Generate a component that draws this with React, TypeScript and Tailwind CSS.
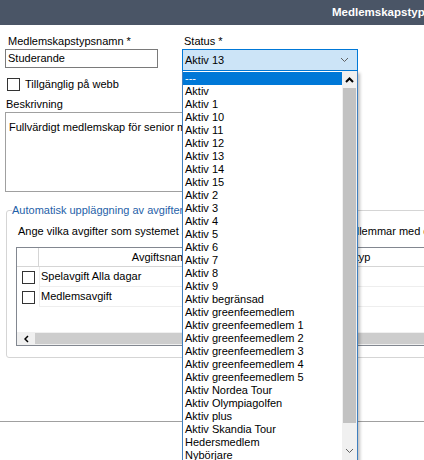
import React from "react";

const statusOptions = [
  "---",
  "Aktiv",
  "Aktiv 1",
  "Aktiv 10",
  "Aktiv 11",
  "Aktiv 12",
  "Aktiv 13",
  "Aktiv 14",
  "Aktiv 15",
  "Aktiv 2",
  "Aktiv 3",
  "Aktiv 4",
  "Aktiv 5",
  "Aktiv 6",
  "Aktiv 7",
  "Aktiv 8",
  "Aktiv 9",
  "Aktiv begränsad",
  "Aktiv greenfeemedlem",
  "Aktiv greenfeemedlem 1",
  "Aktiv greenfeemedlem 2",
  "Aktiv greenfeemedlem 3",
  "Aktiv greenfeemedlem 4",
  "Aktiv greenfeemedlem 5",
  "Aktiv Nordea Tour",
  "Aktiv Olympiagolfen",
  "Aktiv plus",
  "Aktiv Skandia Tour",
  "Hedersmedlem",
  "Nybörjare",
];

const fees = ["Spelavgift Alla dagar", "Medlemsavgift"];

function Box() {
  return <div className="w-[13px] h-[13px] border border-[#333333] bg-white shrink-0" />;
}

function Chevron({ up = false, bold = false }: { up?: boolean; bold?: boolean }) {
  return (
    <svg width="9" height="6" viewBox="0 0 9 6" className="block">
      <path
        d={up ? "M1 5 L4.5 1.5 L8 5" : "M1 1 L4.5 4.5 L8 1"}
        fill="none"
        stroke={bold ? "#000000" : "#606060"}
        strokeWidth={bold ? 2 : 1}
      />
    </svg>
  );
}

export default function App() {
  return (
    <div className="relative w-[424px] h-[460px] overflow-hidden bg-white text-black text-[11px] font-['Liberation_Sans',Arial,sans-serif]">
      <div className="h-[25px] bg-[#4a5566] flex items-center pl-[332px] whitespace-nowrap text-white font-bold text-[11.5px]">
        Medlemskapstyp
      </div>

      <div className="w-[620px] px-[5px] pt-[9px]">
        <div className="flex">
          <div className="w-[153px]">
            <div className="pl-[3px] leading-[15px]">Medlemskapstypsnamn *</div>
            <div className="h-[19px] border border-[#7a7a7a] flex items-center pl-[2px]">Studerande</div>
          </div>
          <div className="ml-[24px] w-[176px]">
            <div className="pl-[2px] leading-[15px]">Status *</div>
            <div className="h-[22px] border border-[#0078d7] bg-[#cce4f7] flex items-center justify-between pl-[2px] pr-[8px]">
              <span>Aktiv 13</span>
              <Chevron />
            </div>
          </div>
        </div>

        <div className="mt-[7px] ml-[2px] flex items-center gap-[5px] h-[13px]">
          <Box />
          <span>Tillgänglig på webb</span>
        </div>

        <div className="mt-[6px] pl-[1px] leading-[14px]">Beskrivning</div>
        <div className="mt-[1px] w-[300px] h-[80px] border border-[#a0a0a0] px-[3px] pt-[6px] whitespace-nowrap overflow-hidden">
          Fullvärdigt medlemskap för senior medlemmar
        </div>

        <fieldset className="mt-[11px] ml-[1px] border border-[#d5d5d5] rounded-[3px] px-[5px] pb-[11px]">
          <legend className="text-[#1f5fa8] leading-[14px]">Automatisk uppläggning av avgifter</legend>
          <div className="mt-[7px] ml-[6px] leading-[14px] whitespace-nowrap">
            Ange vilka avgifter som systemet automatiskt skall läggas på  nya medlemmar med denna typ
          </div>
          <div className="mt-[9px] ml-[4px] h-[99px] border border-[#828790] flex flex-col">
            <div className="flex h-[19px] border-b border-[#d5d5d5] shrink-0">
              <div className="w-[22px] border-r border-[#d5d5d5]" />
              <div className="w-[246px] flex items-center justify-center">Avgiftsnamn</div>
              <div className="flex-1 border-l border-[#d5d5d5] flex items-center pl-[37px]">Avgiftstyp</div>
            </div>
            {fees.map((f) => (
              <div key={f} className="flex h-[20px] shrink-0">
                <div className="w-[22px] flex items-center pl-[5px]">
                  <Box />
                </div>
                <div className="flex-1 border-b border-l border-[#eeeeee] flex items-center pl-[1px]">{f}</div>
              </div>
            ))}
            <div className="flex-1" />
            <div className="h-[13px] flex bg-[#f0f0f0] shrink-0">
              <div className="w-[18px] flex items-center justify-center">
                <svg width="5" height="8" viewBox="0 0 5 8">
                  <path d="M4 1 L1 4 L4 7" fill="none" stroke="#000" strokeWidth="1.5" />
                </svg>
              </div>
              <div className="flex-1 bg-[#cdcdcd] my-[1px]" />
            </div>
          </div>
        </fieldset>
      </div>

      <div className="mt-[63px] border-t border-[#a0a0a0]" />

      <div className="absolute left-[182px] top-[71px] w-[176px] h-[400px] bg-white border-x border-b border-[#3f7fbf] shadow-[2px_2px_3px_rgba(0,0,0,0.25)] flex">
        <div className="flex-1 pt-[1px]">
          {statusOptions.map((o, i) => (
            <div
              key={o}
              className={
                i === 0
                  ? "h-[13px] leading-[13px] pl-[2px] bg-[#0078d7] text-white whitespace-nowrap"
                  : "h-[13px] leading-[13px] pl-[2px] whitespace-nowrap"
              }
            >
              {o}
            </div>
          ))}
        </div>
        <div className="w-[15px] bg-[#f0f0f0] flex flex-col">
          <div className="h-[17px] flex items-center justify-center shrink-0">
            <Chevron up bold />
          </div>
          <div className="h-[335px] bg-[#c2c2c2] mx-[1px] shrink-0" />
          <div className="flex-1" />
          <div className="h-[14px] flex items-center justify-center shrink-0 mb-[12px]">
            <Chevron />
          </div>
        </div>
      </div>
    </div>
  );
}
